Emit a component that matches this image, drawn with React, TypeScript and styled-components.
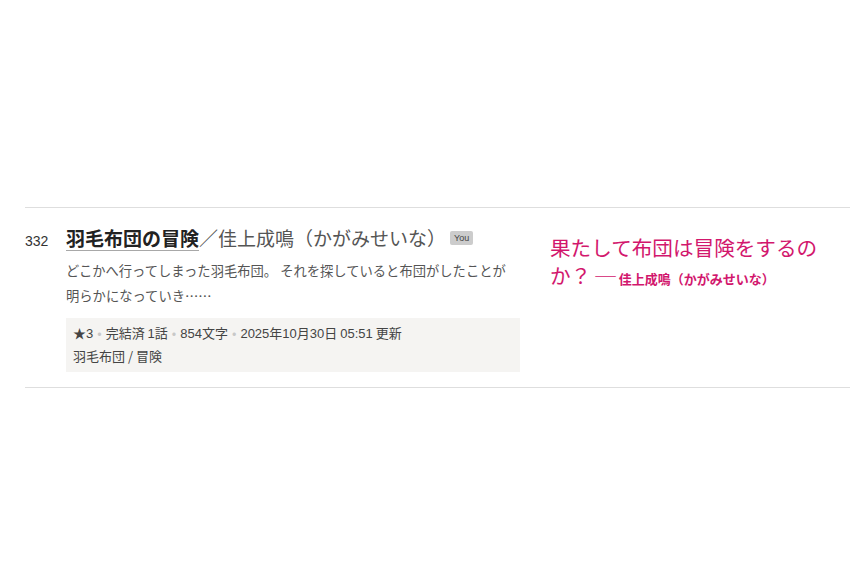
import React from "react";
import styled, { createGlobalStyle } from "styled-components";

const GlobalStyle = createGlobalStyle`
  html, body { margin: 0; padding: 0; background: #ffffff; }
  body { font-family: "Noto Sans CJK JP", "Noto Sans", sans-serif; }
`;

const Page = styled.div`
  width: 868px;
  height: 587px;
  box-sizing: border-box;
  padding: 207px 18px 0 25px;
`;

const Row = styled.div`
  display: grid;
  grid-template-columns: 41px 454px 1fr;
  column-gap: 0;
  border-top: 1px solid #dedede;
  border-bottom: 1px solid #dedede;
  padding: 16px 0 15px 0;
`;

const Rank = styled.div`
  font-family: "Liberation Sans", Arial, sans-serif;
  font-size: 14px;
  line-height: 28px;
  color: #333;
  padding-top: 3px;
`;

const Main = styled.div`
  display: flex;
  flex-direction: column;
`;

const TitleLine = styled.div`
  display: flex;
  align-items: center;
  font-size: 19px;
  line-height: 28px;
  white-space: nowrap;
`;

const Title = styled.span`
  font-weight: 700;
  color: #222;
  text-decoration: underline;
  text-decoration-color: #a8a8a8;
  text-decoration-thickness: 1px;
  text-underline-offset: 4px;
`;

const Author = styled.span`
  color: #555;
  font-weight: 400;
`;

const Badge = styled.span`
  margin-left: 4px;
  background: #cccccc;
  color: #444;
  font-family: "Liberation Sans", Arial, sans-serif;
  font-size: 9px;
  line-height: 14px;
  padding: 0 4px;
  border-radius: 2px;
`;

const Desc = styled.p`
  margin: 6px 0 0 0;
  font-size: 13.3px;
  line-height: 25px;
  color: #555;
`;

const MetaBox = styled.div`
  margin-top: 10px;
  background: #f5f4f2;
  padding: 4px 8px 5px 7px;
  font-size: 13px;
  line-height: 22px;
  color: #444;
`;

const MetaLine = styled.div`
  white-space: nowrap;
`;

const Num = styled.span`
  font-family: "Liberation Sans", Arial, "Noto Sans CJK JP", sans-serif;
`;

const Dot = styled.span`
  color: #c8c8c8;
  margin: 0 4px;
  font-size: 13px;
`;

const Catch = styled.div`
  margin-top: 9px;
  padding-left: 30px;
  color: #d2176d;
  font-size: 20.6px;
  line-height: 28px;
`;

const Dash = styled.span`
  margin: 0 3px 0 4px;
`;

const CatchAuthor = styled.span`
  font-size: 13px;
  font-weight: 700;
`;

export default function App() {
  return (
    <>
      <GlobalStyle />
      <Page>
        <Row>
          <Rank>332</Rank>
          <Main>
            <TitleLine>
              <Title>羽毛布団の冒険</Title>
              <Author>／佳上成鳴（かがみせいな）</Author>
              <Badge>You</Badge>
            </TitleLine>
            <Desc>
              どこかへ行ってしまった羽毛布団。 それを探していると布団がしたことが
              <br />
              明らかになっていき……
            </Desc>
            <MetaBox>
              <MetaLine>
                ★<Num>3</Num>
                <Dot>•</Dot>完結済 <Num>1</Num>話<Dot>•</Dot>
                <Num>854</Num>文字<Dot>•</Dot>
                <Num>2025</Num>年<Num>10</Num>月<Num>30</Num>日 <Num>05:51</Num> 更新
              </MetaLine>
              <MetaLine>羽毛布団 / 冒険</MetaLine>
            </MetaBox>
          </Main>
          <Catch>
            果たして布団は冒険をするの
            <br />
            か？<Dash>─</Dash>
            <CatchAuthor>佳上成鳴（かがみせいな）</CatchAuthor>
          </Catch>
        </Row>
      </Page>
    </>
  );
}
